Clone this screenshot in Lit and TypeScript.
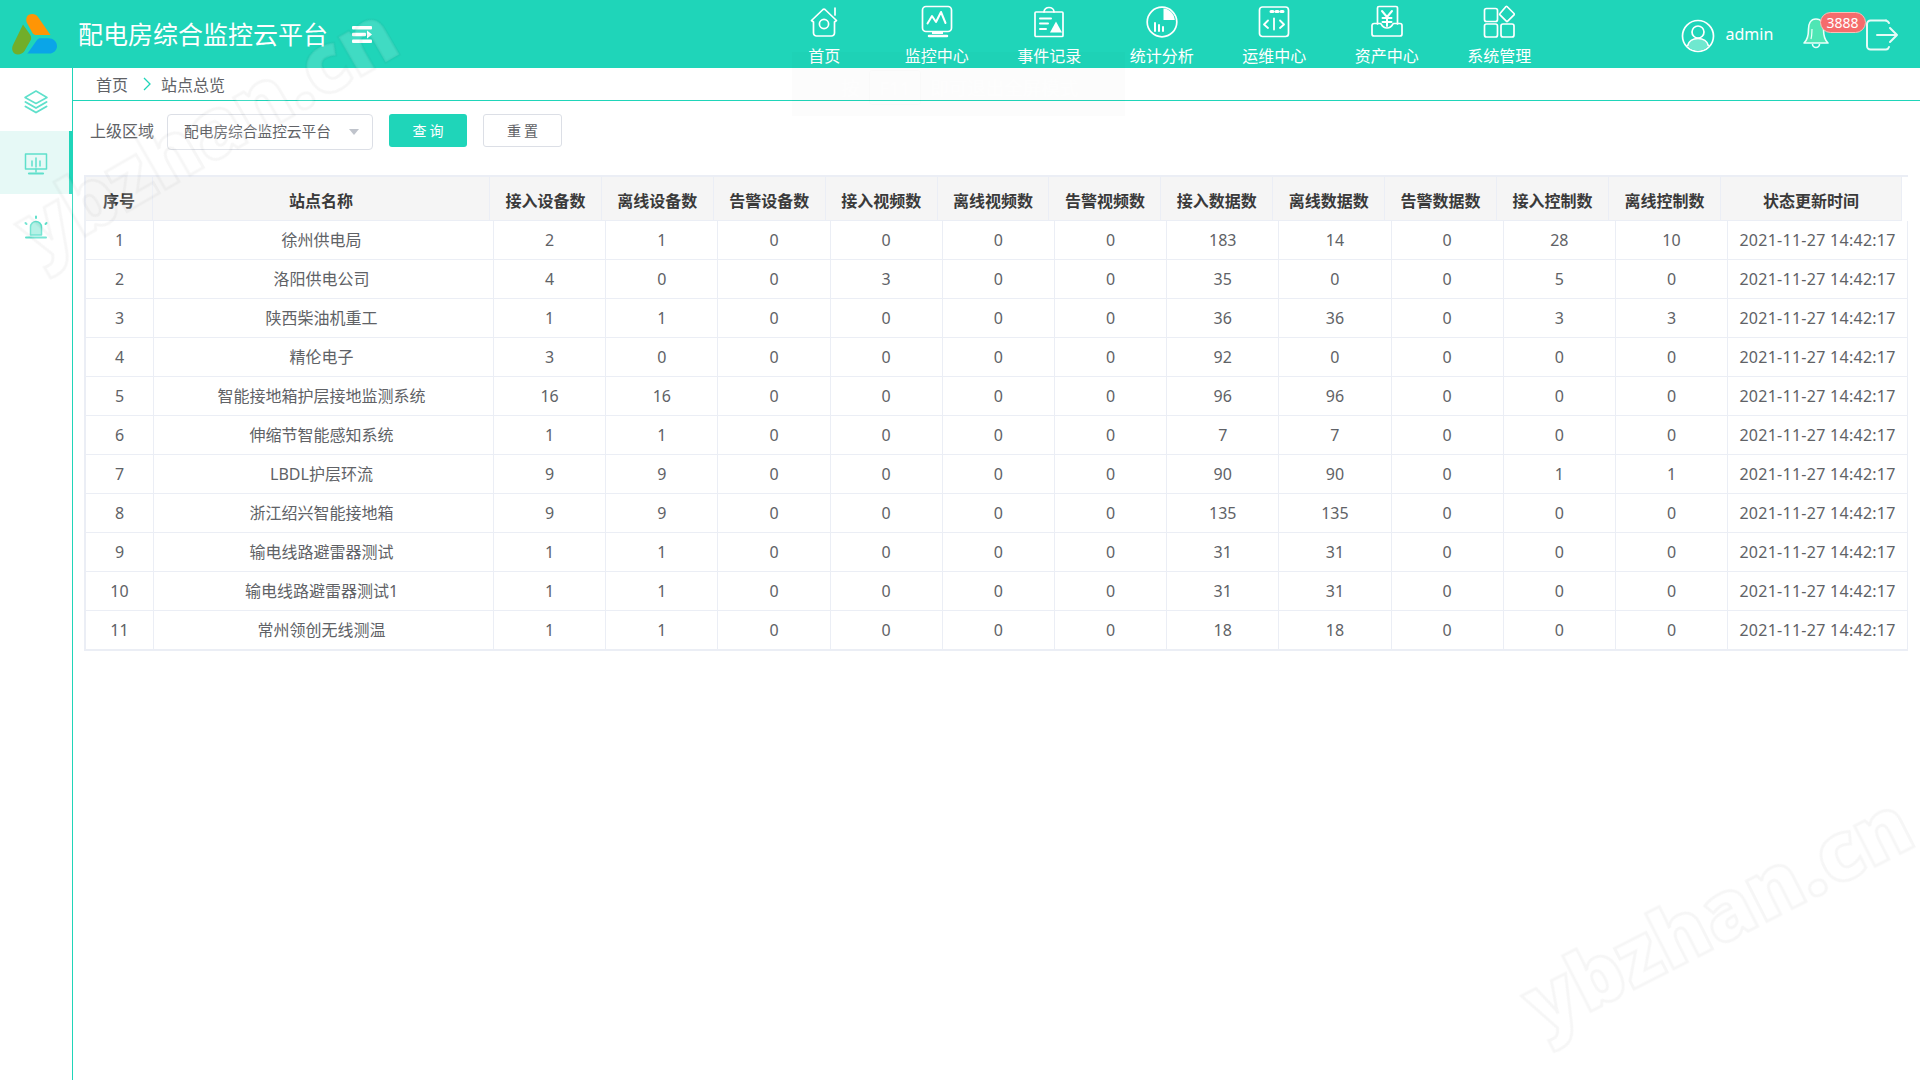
import { LitElement, html, css, svg } from "lit";
import { customElement } from "lit/decorators.js";

const ROWS: (string | number)[][] = [
  [1, "徐州供电局", 2, 1, 0, 0, 0, 0, 183, 14, 0, 28, 10],
  [2, "洛阳供电公司", 4, 0, 0, 3, 0, 0, 35, 0, 0, 5, 0],
  [3, "陕西柴油机重工", 1, 1, 0, 0, 0, 0, 36, 36, 0, 3, 3],
  [4, "精伦电子", 3, 0, 0, 0, 0, 0, 92, 0, 0, 0, 0],
  [5, "智能接地箱护层接地监测系统", 16, 16, 0, 0, 0, 0, 96, 96, 0, 0, 0],
  [6, "伸缩节智能感知系统", 1, 1, 0, 0, 0, 0, 7, 7, 0, 0, 0],
  [7, "LBDL护层环流", 9, 9, 0, 0, 0, 0, 90, 90, 0, 1, 1],
  [8, "浙江绍兴智能接地箱", 9, 9, 0, 0, 0, 0, 135, 135, 0, 0, 0],
  [9, "输电线路避雷器测试", 1, 1, 0, 0, 0, 0, 31, 31, 0, 0, 0],
  [10, "输电线路避雷器测试1", 1, 1, 0, 0, 0, 0, 31, 31, 0, 0, 0],
  [11, "常州领创无线测温", 1, 1, 0, 0, 0, 0, 18, 18, 0, 0, 0],
];
const HEADS = ["序号", "站点名称", "接入设备数", "离线设备数", "告警设备数", "接入视频数", "离线视频数", "告警视频数", "接入数据数", "离线数据数", "告警数据数", "接入控制数", "离线控制数", "状态更新时间"];
const TIME = "2021-11-27 14:42:17";

const NAV_ICONS = [
  svg`<path d="M3.500 15.500 15 4.500a1.500 1.500 0 0 1 2 0l11.500 11-2 1.500v11a3 3 0 0 1-3 3H8.500a3 3 0 0 1-3-3V17z"/><path d="M27 3v7"/><circle cx="16" cy="19" r="4.600"/>`,
  svg`<rect x="1.500" y="1.500" width="29" height="25" rx="3.500"/><path d="M6.500 18.500 11 11l4 6 5-10 4.500 11" stroke-width="2"/><path d="M8 31h18" stroke-width="2.500"/><path d="M11 27h11v2H11z" fill="#fff" stroke="none"/>`,
  svg`<rect x="2" y="7" width="28" height="24.500" rx="1"/><path d="M11 7c0-6 10-6 10 0"/><path d="M7 13.500h11M7 18.500h8M7 24h6" stroke-width="2"/><path d="m23 16.500 6 11H17z" fill="#fff" stroke="none"/>`,
  svg`<circle cx="16" cy="17" r="14.800"/><path d="M17.500 3.500c6 .5 10.700 5 11.300 11.500H17.500z" fill="#fff" stroke="none"/><path d="M9 18v8M13 20v6M17 22v4" stroke-width="2"/>`,
  svg`<rect x="1.500" y="2" width="29" height="29.500" rx="3"/><path d="M13 6.500h2M18 6.500h2M23 6.500h2" stroke-width="3"/><path d="M10 15.500 6 19.500l4 3.500M22 15.500l4 4-4 3.500" stroke-width="1.800"/><path d="M16 13.500v11" stroke-width="1.800"/>`,
  svg`<path d="M6.500 19V3a1.500 1.500 0 0 1 1.500-1.500h17A1.500 1.500 0 0 1 26.500 3v16"/><path d="M3 18.500h6.500c1 0 1 4.500 6.500 4.500s5.500-4.500 6.500-4.500H29a2 2 0 0 1 2 2V29a2 2 0 0 1-2 2H3a2 2 0 0 1-2-2v-8.500a2 2 0 0 1 2-2z"/><path d="m11 6 5 6 5-6M16 12v9M11.500 13h9M11.500 17h9" stroke-width="2"/>`,
  svg`<rect x="1.500" y="3.500" width="13" height="13" rx="2"/><path d="m24 1.500 7 7a1 1 0 0 1 0 1.400l-6.300 6.300a1 1 0 0 1-1.400 0l-6.300-6.300a1 1 0 0 1 0-1.400L23 1.500a.7.7 0 0 1 1 0z"/><rect x="1.500" y="19" width="13" height="13" rx="2"/><rect x="18" y="19" width="13" height="13" rx="2"/>`,
];
const NAV_LABELS = ["首页", "监控中心", "事件记录", "统计分析", "运维中心", "资产中心", "系统管理"];

@customElement("app-root")
export class AppRoot extends LitElement {
  static styles = css`
    :host {
      display: block;
      position: relative;
      width: 100%;
      height: 100vh;
      overflow: hidden;
      background: #fff;
      font-family: "Noto Sans", "Noto Sans CJK SC", sans-serif;
      color: #606266;
    }
    .page { display: flex; flex-direction: column; height: 100%; }
    .top {
      flex: 0 0 68px;
      display: flex;
      background: #1fd5b9;
      color: #fff;
    }
    .brand { flex: 0 0 768px; display: flex; align-items: center; padding-left: 12px; box-sizing: border-box; }
    .logo { width: 46px; height: 42px; display: block; margin-right: 20px; }
    .title { font-size: 25px; line-height: 68px; white-space: nowrap; }
    .burger { width: 20px; height: 17px; margin-left: 24px; display: block; }
    .nav { display: flex; }
    .nav-item {
      width: 112.5px;
      display: flex;
      flex-direction: column;
      align-items: center;
      padding-top: 4.500px;
      font-size: 16px;
      line-height: 22px;
    }
    .nav-item svg {
      width: 32px;
      height: 36px;
      margin-bottom: 4.500px;
      fill: none;
      stroke: #fff;
      stroke-width: 1.700;
      stroke-linejoin: round;
      stroke-linecap: round;
      display: block;
    }
    .right { display: flex; align-items: center; padding-left: 125px; height: 68px; }
    .user-icon { width: 34px; height: 34px; display: block; margin-top: 4px; }
    .admin { font-size: 16px; margin-left: 11px; line-height: 22px; width: 77px; }
    .bell-wrap { position: relative; width: 62px; height: 68px; }
    .bell { position: absolute; left: 0; top: 17px; width: 26px; height: 32px; }
    .badge {
      position: absolute;
      left: 17px;
      top: 12px;
      width: 46px;
      height: 21px;
      box-sizing: border-box;
      border: 1px solid #f7c0b8;
      border-radius: 11px;
      background: #f56c6c;
      font-size: 14px;
      line-height: 19px;
      text-align: center;
      color: #fff;
    }
    .exit { width: 34px; height: 32px; display: block; margin-top: 1px; }

    .body { flex: 1; display: flex; min-height: 0; }
    .side { flex: 0 0 72px; border-right: 1.500px solid #1fd5b9; box-sizing: content-box; }
    .side-item { height: 63px; display: flex; align-items: center; justify-content: center; box-sizing: border-box; padding-top: 2px; }
    .side-item.on { background: #e6f9f6; border-right: 3px solid #1fd5b9; }
    .side-item svg { width: 26px; height: 26px; fill: none; stroke: #5fe0cb; stroke-width: 1.500; stroke-linejoin: round; stroke-linecap: round; display: block; }
    .side-item.on svg { margin-left: 3px; }

    .main { flex: 1; min-width: 0; }
    .crumb {
      height: 32px;
      box-sizing: content-box;
      border-bottom: 1.500px solid #1fd5b9;
      display: flex;
      align-items: center;
      padding-left: 23px;
      font-size: 16px;
    }
    .crumb svg { width: 8px; height: 14px; margin: 0 10px 0 15px; fill: none; stroke: #1fd5b9; stroke-width: 1.300; display: block; }
    .filter { display: flex; align-items: flex-start; padding: 13px 0 0 17px; height: 36px; }
    .label { font-size: 16px; line-height: 34px; width: 77px; white-space: nowrap; }
    .select {
      width: 206px;
      height: 36px;
      box-sizing: border-box;
      border: 1px solid #dcdfe6;
      border-radius: 4px;
      display: flex;
      align-items: center;
      padding: 0 0 3px 16px;
      font-size: 14.700px;
      white-space: nowrap;
      position: relative;
    }
    .caret { position: absolute; left: 181px; top: 14px; width: 0; height: 0; border: 5px solid transparent; border-top: 6px solid #c0c4cc; border-bottom: 0; }
    .btn {
      height: 33px;
      box-sizing: border-box;
      border-radius: 3px;
      font-size: 14px;
      line-height: 33px;
      text-align: center;
      letter-spacing: 3px;
      padding-left: 3px;
      width: 78px;
      margin-left: 16px;
    }
    .btn.primary { background: #1fd5b9; color: #fff; }
    .btn.plain { border: 1px solid #dcdfe6; line-height: 31px; width: 79px; margin-left: 16px; }

    .wrap {
      margin: 25px 0 0 11px;
      width: 1824px;
      border-top: 2px solid #ebeef5;
      border-left: 2px solid #ebeef5;
      box-sizing: border-box;
    }
    table { border-collapse: separate; border-spacing: 0; table-layout: fixed; }
    .thead { width: 1816px; }
    .tbody { width: 1822px; border-bottom: 2px solid #ebeef5; }
    th, td { padding: 0; text-align: center; font-size: 16px; white-space: nowrap; box-sizing: border-box; border-right: 1px solid #ebeef5; border-bottom: 1px solid #ebeef5; }
    th { height: 44px; background: #f5f5f5; font-weight: 700; color: #3a3a3a; padding-top: 2px; }
    td { height: 39px; color: #606266; }
    .thead th:nth-child(1) { width: 67px; }
    .thead th:nth-child(2) { width: 337px; }
    .thead th { width: 111.900px; }
    .thead th:nth-child(14) { width: 181px; }
    .tbody td:nth-child(1) { width: 68px; }
    .tbody td:nth-child(2) { width: 340px; padding: 0 4px 2px 0; }
    .tbody td { width: 112.200px; }
    .tbody td:nth-child(14) { width: 180px; letter-spacing: 0.27px; }
    .tbody tr:last-child td { border-bottom: 0; height: 38px; }

    .mark {
      position: absolute;
      font: 800 81px/1 "Open Sans", sans-serif;
      white-space: nowrap;
      transform-origin: 0 100%;
      color: rgba(255, 255, 255, 0.15);
      -webkit-text-stroke: 3px rgba(0, 0, 0, 0.035);
      filter: blur(0.6px);
      pointer-events: none;
    }
    .mark.a { left: 42px; top: 190px; transform: rotate(-30deg); }
    .mark.b { left: 1546px; top: 963px; transform: rotate(-27deg); }
    .hint {
      position: absolute;
      left: 792px;
      top: 52px;
      width: 333px;
      height: 64px;
      background: rgba(0, 0, 0, 0.012);
      display: flex;
      align-items: center;
      box-sizing: border-box;
      padding: 6px 0 0 49px;
      font-size: 18.500px;
      color: rgba(255, 255, 255, 0.65);
      pointer-events: none;
      white-space: nowrap;
    }
    .hint b { font-weight: 400; border: 1px solid rgba(0, 0, 0, 0.012); border-radius: 3px; margin: 0 9px; padding: 4px 10px; }
  `;

  render() {
    return html`
      <div class="page">
        <header class="top">
          <div class="brand">
            <svg class="logo" viewBox="0 0 46 42">
              <path d="M15 3.500c2.500-3.500 9-3 11 .5L38.500 22H24.500c-2 0-3-.5-4-2L15 10c-1-2-1-4.500 0-6.500z" fill="#ff9505"/>
              <path d="M11 11.500 18 21.500c1.500 2.300 1.500 4 .5 6L12.500 38c-2 3.200-7 4.500-10 2.500C0 38.500-.5 35 1 32z" fill="#71ae2a"/>
              <path d="M15.500 40.500 25 27c1-1.300 2-1.800 3.500-1.800H36c5.500 0 9 3.500 9 8 0 4-3.500 7.300-8 7.300H17c-1 0-1.800-.6-1.500 0z" fill="#0aa5e8"/>
            </svg>
            <span class="title">配电房综合监控云平台</span>
            <svg class="burger" viewBox="0 0 20 17" fill="#fff">
              <rect x="0" y="0" width="20" height="3.500" rx="1"/>
              <rect x="0" y="6.700" width="14" height="3.500" rx="1"/>
              <path d="M15 4.500 20 8.500l-5 4z"/>
              <rect x="0" y="13.500" width="20" height="3.500" rx="1"/>
            </svg>
          </div>
          <nav class="nav">
            ${NAV_LABELS.map(
              (l, i) => html`<div class="nav-item"><svg viewBox="0 0 32 36">${NAV_ICONS[i]}</svg>${l}</div>`
            )}
          </nav>
          <div class="right">
            <svg class="user-icon" viewBox="0 0 34 34" fill="none" stroke="#fff" stroke-width="1.700">
              <circle cx="17" cy="17" r="15.500"/>
              <circle cx="17" cy="13" r="6"/>
              <path d="M6.500 27c1-5 5.500-7.500 10.500-7.500S26.500 22 27.500 27c-2.500 3-6.500 4.500-10.500 4.500S9 30 6.500 27z" fill="#6fe8cf" stroke="none"/>
              <path d="M6.500 27c1-5 5.500-7.500 10.500-7.500S26.500 22 27.500 27"/>
            </svg>
            <span class="admin">admin</span>
            <div class="bell-wrap">
              <svg class="bell" viewBox="0 0 26 32" stroke="#ecfffa" stroke-width="1.600" stroke-linejoin="round" fill="#4fe6b4">
                <path d="M13 2c5.500 0 7.500 5 7.500 10 0 6 1 11 4.500 14H1c3.500-3 4.500-8 4.500-14C5.500 7 7.500 2 13 2z"/>
                <path d="M9.500 27a3.500 3.500 0 0 0 7 0" fill="none"/>
                <path d="M8 22c1-3 .8-7 1-10" fill="none" stroke-width="1.200"/>
              </svg>
              <div class="badge">3888</div>
            </div>
            <svg class="exit" viewBox="0 0 34 32" fill="none" stroke="#e6fbf7" stroke-width="2" stroke-linecap="round" stroke-linejoin="round">
              <path d="M21 1.500H5.500A3.500 3.500 0 0 0 2 5v22a3.500 3.500 0 0 0 3.500 3.500H21a3.500 3.500 0 0 0 3-2.500"/>
              <path d="M24 4c-.5-1-1.500-2-3-2.500"/>
              <path d="M12 16h20M25 9l7 7-7 7"/>
            </svg>
          </div>
        </header>
        <div class="body">
          <aside class="side">
            <div class="side-item">
              <svg viewBox="0 0 26 26"><path d="M13 3 24 9.500 13 15.500 2 9.500z"/><path d="M2.500 14 13 20 23.500 14" stroke-width="2"/><path d="M2.500 18.500 13 24.500l10.500-6" stroke-width="2"/></svg>
            </div>
            <div class="side-item on">
              <svg viewBox="0 0 26 26"><rect x="2.500" y="3" width="21" height="15"/><path d="M13 7v9M9 10v5M17 10v5"/><path d="M6 22.500h14" stroke-width="2.200"/><path d="M13 18v3"/></svg>
            </div>
            <div class="side-item">
              <svg viewBox="0 0 26 26"><path d="M7.500 21v-8a5.500 5.500 0 0 1 11 0v8z" fill="#a9efe2"/><path d="M3 23.500h20" stroke-width="2"/><path d="M2.500 9l1 1M23.500 9l-1 1M13 2.500v1.500" stroke-width="2"/></svg>
            </div>
          </aside>
          <main class="main">
            <div class="crumb">
              <span>首页</span>
              <svg viewBox="0 0 8 14"><path d="m1 1 6 6-6 6"/></svg>
              <span>站点总览</span>
            </div>
            <div class="filter">
              <span class="label">上级区域</span>
              <div class="select">配电房综合监控云平台<span class="caret"></span></div>
              <div class="btn primary">查询</div>
              <div class="btn plain">重置</div>
            </div>
            <div class="wrap">
              <table class="thead">
                <tr>${HEADS.map((h) => html`<th>${h}</th>`)}</tr>
              </table>
              <table class="tbody">
                ${ROWS.map(
                  (r) => html`<tr>${r.map((c) => html`<td>${c}</td>`)}<td>${TIME}</td></tr>`
                )}
              </table>
            </div>
          </main>
        </div>
      </div>
      <div class="hint">按<b>F11</b>即可退出全屏模式</div>
      <div class="mark a">ybzhan.cn</div>
      <div class="mark b">ybzhan.cn</div>
    `;
  }
}
